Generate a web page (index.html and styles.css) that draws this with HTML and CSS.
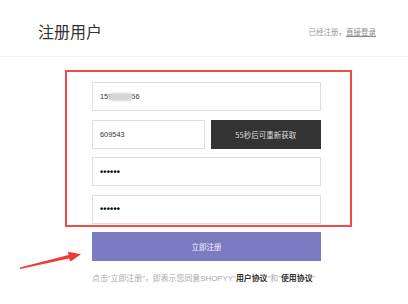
FILE: index.html
```html
<!DOCTYPE html>
<html lang="zh">
<head>
<meta charset="utf-8">
<title>注册用户</title>
<link rel="stylesheet" href="styles.css">
</head>
<body>
<header class="top">
  <h1 class="title">注册用户</h1>
  <div class="login">已经注册，<a href="#" class="login-link">直接登录</a></div>
</header>
<main class="main">
  <form class="form">
    <div class="field"><span class="val">159<span class="blur"></span>56</span></div>
    <div class="code-row">
      <div class="field"><span class="val">609543</span></div>
      <button type="button" class="code-btn">55秒后可重新获取</button>
    </div>
    <div class="field"><span class="dots">••••••</span></div>
    <div class="field"><span class="dots">••••••</span></div>
    <button type="button" class="submit">立即注册</button>
    <p class="agree">点击"立即注册"，即表示您同意SHOPYY"<b>用户协议</b>"和"<b>使用协议</b>"</p>
  </form>
</main>
<div class="redbox"></div>
<svg class="arrow" width="408" height="304" viewBox="0 0 408 304">
  <polygon points="20.2,268.9 68.9,258.4 70.6,261.4 81,254.2 68,251.8 68.5,255 19.8,267.5" fill="#f03a3a"/>
</svg>
</body>
</html>
```

FILE: styles.css
```css
* { box-sizing: border-box; }
html, body { margin: 0; padding: 0; background: #fff; }
body {
  width: 408px;
  height: 304px;
  overflow: hidden;
  position: relative;
  font-family: "Liberation Sans", "Noto Sans CJK SC", sans-serif;
  color: #333;
}
.top {
  height: 57px;
  border-bottom: 1px solid #f2f2f2;
  display: flex;
  align-items: center;
  justify-content: space-between;
  padding: 6px 32px 0 38px;
}
.title {
  margin: 0;
  font-family: "Noto Sans CJK SC", sans-serif;
  font-weight: 400;
  font-size: 16px;
  color: #333;
  line-height: 20px;
}
.login {
  font-family: "Noto Sans CJK SC", sans-serif;
  font-size: 7.5px;
  color: #999;
}
.login-link { color: #888; text-decoration: underline; }
.main { padding: 25px 0 0 92px; }
.form {
  width: 229px;
  display: flex;
  flex-direction: column;
  gap: 8.5px;
}
.field {
  height: 29px;
  border: 1px solid #dedede;
  background: #fff;
  display: flex;
  align-items: center;
  padding-left: 7px;
  font-size: 7.4px;
  color: #333;
}
.val { display: inline-flex; align-items: center; }
.blur {
  display: inline-block;
  width: 24px;
  height: 8px;
  margin: 0 -2px 0 -3px;
  background: #d6d6d6;
  border-radius: 4px;
  filter: blur(0.8px);
}
.dots {
  font-size: 9px;
  color: #000;
  font-weight: 700;
  letter-spacing: 0.2px;
}
.code-row {
  display: grid;
  grid-template-columns: 113px 1fr;
  gap: 5.5px;
}
.code-btn {
  height: 29px;
  border: none;
  background: #333;
  color: #ddd;
  font-family: "Noto Sans CJK SC", sans-serif;
  font-size: 7.5px;
  padding: 0;
}
.submit {
  height: 29px;
  border: none;
  background: #7b7bc3;
  color: #f4f4fa;
  font-family: "Noto Sans CJK SC", sans-serif;
  font-size: 7.5px;
  padding: 0;
}
.agree {
  margin: 3px 0 0;
  font-family: "Liberation Sans", "Noto Sans CJK SC", sans-serif;
  font-size: 7.9px;
  line-height: 12px;
  color: #aaa;
  white-space: nowrap;
}
.agree b { color: #333; font-weight: 700; }
.redbox {
  position: absolute;
  left: 65px;
  top: 70px;
  width: 287px;
  height: 157px;
  border: 2px solid #f24848;
}
.arrow {
  position: absolute;
  left: 0;
  top: 0;
  pointer-events: none;
}
```
